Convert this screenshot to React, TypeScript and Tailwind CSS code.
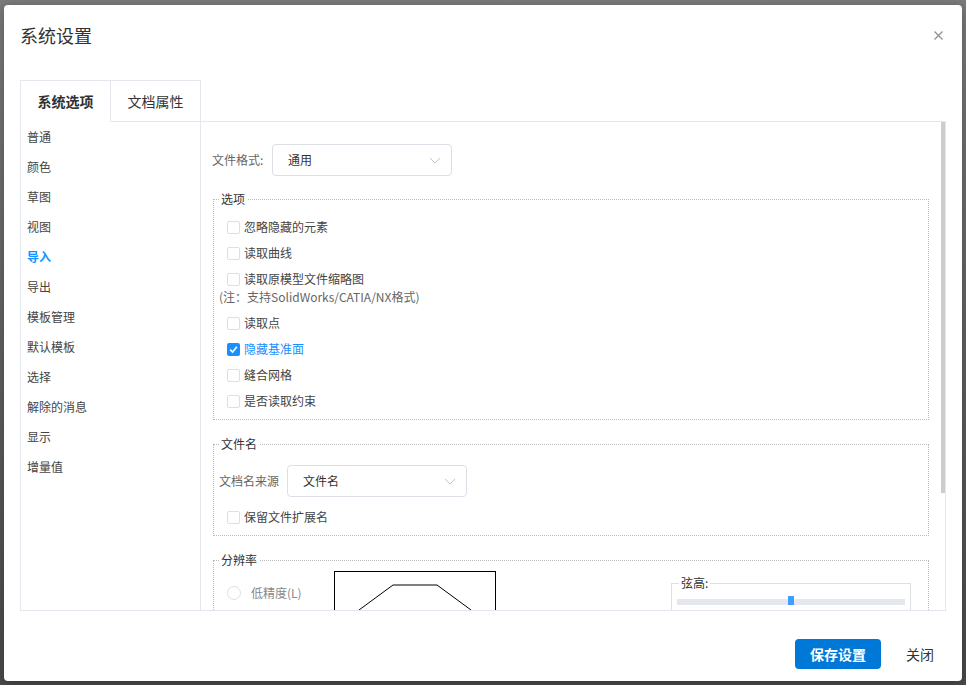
import React from 'react';

const navItems = ['普通', '颜色', '草图', '视图', '导入', '导出', '模板管理', '默认模板', '选择', '解除的消息', '显示', '增量值'];

const importOptions = [
  { label: '忽略隐藏的元素', checked: false },
  { label: '读取曲线', checked: false },
  { label: '读取原模型文件缩略图', checked: false, note: '(注：支持SolidWorks/CATIA/NX格式)' },
  { label: '读取点', checked: false },
  { label: '隐藏基准面', checked: true },
  { label: '缝合网格', checked: false },
  { label: '是否读取约束', checked: false },
];

const Checkbox = ({ label, checked }: { label: string; checked?: boolean }) => (
  <div className="flex h-[26px] items-center pl-[8px]">
    {checked ? (
      <span className="mr-[4px] flex h-[13px] w-[13px] items-center justify-center rounded-[2px] bg-[#1890ff]">
        <svg width="9" height="9" viewBox="0 0 9 9" fill="none">
          <path d="M1.2 4.6 L3.6 7 L7.9 1.8" stroke="#fff" strokeWidth="1.6" />
        </svg>
      </span>
    ) : (
      <span className="mr-[4px] h-[13px] w-[13px] rounded-[2px] border border-[#dcdfe6] bg-white" />
    )}
    <span className={checked ? 'text-[#1890ff]' : 'text-[#444]'}>{label}</span>
  </div>
);

const Select = ({ value, width }: { value: string; width: string }) => (
  <div className={`flex h-[32px] items-center justify-between rounded-[4px] border border-[#dcdfe6] bg-white pl-[15px] pr-[10px] text-[#333] ${width}`}>
    <span>{value}</span>
    <svg width="12" height="7" viewBox="0 0 12 7" fill="none">
      <path d="M1 1 L6 6 L11 1" stroke="#c0c4cc" strokeWidth="1" />
    </svg>
  </div>
);

const Group = ({ title, children, className = '' }: { title: string; children: React.ReactNode; className?: string }) => (
  <fieldset className={`ml-px border border-dotted border-[#bbb] pl-[5px] pr-[5px] ${className}`}>
    <legend className="px-[2px] text-[12px] leading-[18px] text-[#333]">{title}</legend>
    {children}
  </fieldset>
);

export default function App() {
  return (
    <div
      className="h-[685px] w-[966px] overflow-hidden bg-gradient-to-b from-[#7c7c7c] to-[#4a4a4a] pl-[4px] pt-[5px]"
      style={{ fontFamily: '"Noto Sans CJK SC", "Noto Sans", sans-serif' }}
    >
      <div className="flex h-[676px] w-[958px] flex-col rounded-[4px] bg-white shadow-[0_2px_12px_rgba(0,0,0,0.3)]">
        {/* header */}
        <div className="flex items-center justify-between pl-[16px] pr-[18px] pt-[19px]">
          <h1 className="text-[18px] leading-[22px] text-[#303133]">系统设置</h1>
          <button className="flex h-[12px] w-[12px] items-center justify-center">
            <svg width="9" height="9" viewBox="0 0 9 9">
              <path d="M0.5 0.5 L8.5 8.5 M8.5 0.5 L0.5 8.5" stroke="#909399" strokeWidth="1.3" />
            </svg>
          </button>
        </div>

        {/* tabs */}
        <div className="mx-4 mt-[34px] flex h-[531px] flex-col text-[12px]">
          <div className="flex h-[42px] shrink-0">
            <div className="flex w-[91px] items-center justify-center border-l border-r border-t border-[#e4e7ed] text-[14px] font-bold text-[#303133]">
              系统选项
            </div>
            <div className="flex w-[90px] items-center justify-center border-b border-r border-t border-[#e4e7ed] text-[14px] text-[#333]">
              文档属性
            </div>
            <div className="flex-1 border-b border-[#e4e7ed]" />
          </div>

          <div className="flex min-h-0 flex-1 border-b border-l border-r border-[#e4e7ed]">
            {/* left nav */}
            <ul className="w-[180px] shrink-0 border-r border-[#e4e7ed] pl-[6px]">
              {navItems.map((item) => (
                <li
                  key={item}
                  className={`flex h-[30px] items-center ${item === '导入' ? 'font-bold text-[#1890ff]' : 'text-[#444]'}`}
                >
                  {item}
                </li>
              ))}
            </ul>

            {/* content */}
            <div className="relative min-w-0 flex-1 overflow-hidden pl-[11px] pr-[16px] pt-[22px]">
              <div className="flex h-[32px] items-center">
                <span className="w-[60px] text-[#666]">文件格式:</span>
                <Select value="通用" width="w-[180px]" />
              </div>

              <Group title="选项" className="mt-[14px] pb-[5px] pt-[6px]">
                {importOptions.map((opt) => (
                  <React.Fragment key={opt.label}>
                    <Checkbox label={opt.label} checked={opt.checked} />
                    {opt.note && <div className="-mt-[8px] flex h-[26px] items-center text-[#666]">{opt.note}</div>}
                  </React.Fragment>
                ))}
              </Group>

              <Group title="文件名" className="mt-[15px] pb-[5px] pt-[12px]">
                <div className="flex h-[32px] items-center">
                  <span className="w-[68px] text-[#666]">文档名来源</span>
                  <Select value="文件名" width="w-[180px]" />
                </div>
                <div className="mt-[7px]">
                  <Checkbox label="保留文件扩展名" />
                </div>
              </Group>

              <Group title="分辨率" className="mt-[15px] pb-[10px] pt-[2px]">
                <div className="flex items-start">
                  <div className="flex w-[115px] shrink-0 flex-col pl-[8px] pt-[13px]">
                    <div className="flex h-[18px] items-center">
                      <span className="mr-[10px] h-[14px] w-[14px] rounded-full border border-[#dcdfe6]" />
                      <span className="text-[#888]">低精度(L)</span>
                    </div>
                  </div>
                  <div className="h-[120px] w-[162px] shrink-0 border border-black">
                    <svg width="160" height="118" viewBox="0 0 160 118" fill="none">
                      <path d="M24 38 L58 13 L102 13 L136 38 L136 80 L102 105 L58 105 L24 80 Z" stroke="#000" strokeWidth="1" />
                    </svg>
                  </div>
                  <fieldset className="ml-[175px] mt-[5px] w-[240px] border border-[#dcdfe6] px-[5px] pb-[10px]">
                    <legend className="ml-[2px] px-[2px] text-[12px] leading-[14px] text-[#333]">弦高:</legend>
                    <div className="relative mt-[9px] h-[6px] bg-[#e4e7ed]">
                      <span className="absolute left-[111px] top-[-3px] h-[9px] w-[6px] bg-[#409eff]" />
                    </div>
                  </fieldset>
                </div>
              </Group>

              {/* scrollbar */}
              <div className="absolute right-[0px] top-0 h-[371px] w-[4px] bg-[#cdcdcd]" />
            </div>
          </div>
        </div>

        {/* footer */}
        <div className="mt-[28px] flex items-center justify-end gap-[13px] pr-4">
          <button className="h-[30px] w-[86px] rounded-[4px] bg-[#0078d7] text-[14px] font-bold text-white">保存设置</button>
          <button className="h-[30px] px-[12px] text-[14px] text-[#333]">关闭</button>
        </div>
      </div>
    </div>
  );
}
